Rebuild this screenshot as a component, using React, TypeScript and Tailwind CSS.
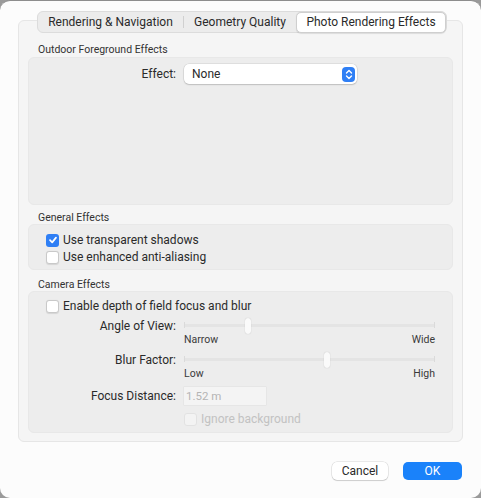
import React from "react";

const font = { fontFamily: "Roboto, 'Noto Sans', sans-serif" };

function Check({ checked, disabled }: { checked?: boolean; disabled?: boolean }) {
  if (checked) {
    return (
      <span className="flex h-[13px] w-[13px] items-center justify-center rounded-[3px] bg-[#2f7ff5]">
        <svg width="10" height="10" viewBox="0 0 10 10">
          <path d="M2 5.2 L4.2 7.4 L8 2.6" fill="none" stroke="white" strokeWidth="1.7" strokeLinecap="round" strokeLinejoin="round" />
        </svg>
      </span>
    );
  }
  return (
    <span
      className={
        "h-[13px] w-[13px] rounded-[3px] border " +
        (disabled ? "border-[#e2e2e2] bg-[#f3f3f3]" : "border-[#c9c9c9] bg-white shadow-[0_0.5px_1px_rgba(0,0,0,0.1)]")
      }
    />
  );
}

function Slider({ pos, left, right }: { pos: number; left: string; right: string }) {
  return (
    <div className="w-[251px]">
      <div className="relative h-[16px]">
        <div className="absolute left-0 right-0 top-[6px] h-[3px] rounded-full bg-[#e4e4e4]" />
        <div className="absolute left-0 top-[4px] h-[6px] w-px bg-[#dadada]" />
        <div className="absolute right-0 top-[4px] h-[6px] w-px bg-[#dadada]" />
        <div
          className="absolute top-0 h-[16px] w-[6px] rounded-[3px] bg-[#fafafa] shadow-[0_0_1px_rgba(0,0,0,0.25)]"
          style={{ left: pos }}
        />
      </div>
      <div className="flex justify-between text-[10.5px] leading-[12px] text-[#3a3a3a]">
        <span>{left}</span>
        <span>{right}</span>
      </div>
    </div>
  );
}

export default function App() {
  return (
    <div className="h-[498px] w-[481px] bg-[#9a9a9a]" style={font}>
      <div className="flex h-[498px] w-[481px] flex-col rounded-[10px] border-t border-[#8d8d8d] bg-[#fcfcfc] text-[12px] leading-[16px] text-[#2a2a2a]">
        <div className="relative mx-[18px] mt-[19px] h-[422px] rounded-[6px] border border-[#e6e6e6] bg-[#f5f5f5] px-[9px] pt-[22px]">
          {/* tabs */}
          <div className="absolute left-[18px] top-[-10px] flex h-[22px] w-[410px] items-center rounded-[6px] border border-[#dcdcdc] bg-[#ececec] text-[12px]">
            <div className="flex h-full w-[145px] items-center justify-center">Rendering &amp; Navigation</div>
            <div className="h-[12px] w-px bg-[#d0d0d0]" />
            <div className="flex h-full w-[112px] items-center justify-center">Geometry Quality</div>
            <div className="flex h-[21px] flex-1 items-center justify-center rounded-[5px] border border-[#cfcfcf] bg-white shadow-[0_0.5px_1px_rgba(0,0,0,0.1)]">
              Photo Rendering Effects
            </div>
          </div>

          <div className="pl-[10px] text-[10.5px] leading-[13px] text-[#333]">Outdoor Foreground Effects</div>
          <div className="mt-[1px] h-[148px] rounded-[6px] border border-[#e8e8e8] bg-[#ededed] pt-[6px]">
            <div className="flex items-center">
              <div className="w-[155px] pr-[8px] text-right">Effect:</div>
              <div className="flex h-[20px] w-[173px] items-center justify-between rounded-[5px] bg-white pl-[8px] pr-[2px] shadow-[0_0_0_0.5px_rgba(0,0,0,0.12),0_1px_1.5px_rgba(0,0,0,0.15)]">
                <span>None</span>
                <span className="flex h-[15px] w-[13px] items-center justify-center rounded-[4px] bg-[#2f7ff5]">
                  <svg width="8" height="11" viewBox="0 0 8 11">
                    <path d="M1.5 4 L4 1.5 L6.5 4 M1.5 7 L4 9.5 L6.5 7" fill="none" stroke="white" strokeWidth="1.4" strokeLinecap="round" strokeLinejoin="round" />
                  </svg>
                </span>
              </div>
            </div>
          </div>

          <div className="mt-[6px] pl-[10px] text-[10.5px] leading-[13px] text-[#333]">General Effects</div>
          <div className="flex h-[46px] flex-col gap-[1px] rounded-[6px] border border-[#e8e8e8] bg-[#ededed] pl-[17px] pt-[7px]">
            <div className="flex items-center gap-[4px]">
              <Check checked />
              <span>Use transparent shadows</span>
            </div>
            <div className="flex items-center gap-[4px]">
              <Check />
              <span>Use enhanced anti-aliasing</span>
            </div>
          </div>

          <div className="mt-[8px] pl-[10px] text-[10.5px] leading-[13px] text-[#333]">Camera Effects</div>
          <div className="h-[142px] rounded-[6px] border border-[#e8e8e8] bg-[#ededed] pl-[17px] pt-[6px]">
            <div className="flex items-center gap-[4px]">
              <Check />
              <span>Enable depth of field focus and blur</span>
            </div>
            <div className="mt-[4px] flex items-start">
              <div className="w-[138px] pr-[8px] text-right">Angle of View:</div>
              <Slider pos={61} left="Narrow" right="Wide" />
            </div>
            <div className="mt-[6px] flex items-start">
              <div className="w-[138px] pr-[8px] text-right">Blur Factor:</div>
              <Slider pos={140} left="Low" right="High" />
            </div>
            <div className="mt-[7px] flex items-center">
              <div className="w-[138px] pr-[8px] text-right">Focus Distance:</div>
              <div className="flex h-[18px] w-[82px] items-center bg-[#f4f4f4] pl-[2px] text-[11.5px] text-[#b4b4b4] shadow-[0_0_0_0.5px_rgba(0,0,0,0.06)]">
                1.52 m
              </div>
            </div>
            <div className="mt-[6px] flex items-center gap-[4px] pl-[138px] text-[#c2c2c2]">
              <Check disabled />
              <span>Ignore background</span>
            </div>
          </div>
        </div>

        <div className="mt-[20px] flex justify-end gap-[15px] pr-[19px] text-[12px]">
          <div className="flex h-[18px] w-[56px] items-center justify-center rounded-[5px] bg-white shadow-[0_0_0_0.5px_rgba(0,0,0,0.15),0_1px_1px_rgba(0,0,0,0.12)]">
            Cancel
          </div>
          <div className="flex h-[18px] w-[59px] items-center justify-center rounded-[5px] bg-[#1a82fa] text-white">
            OK
          </div>
        </div>
      </div>
    </div>
  );
}
